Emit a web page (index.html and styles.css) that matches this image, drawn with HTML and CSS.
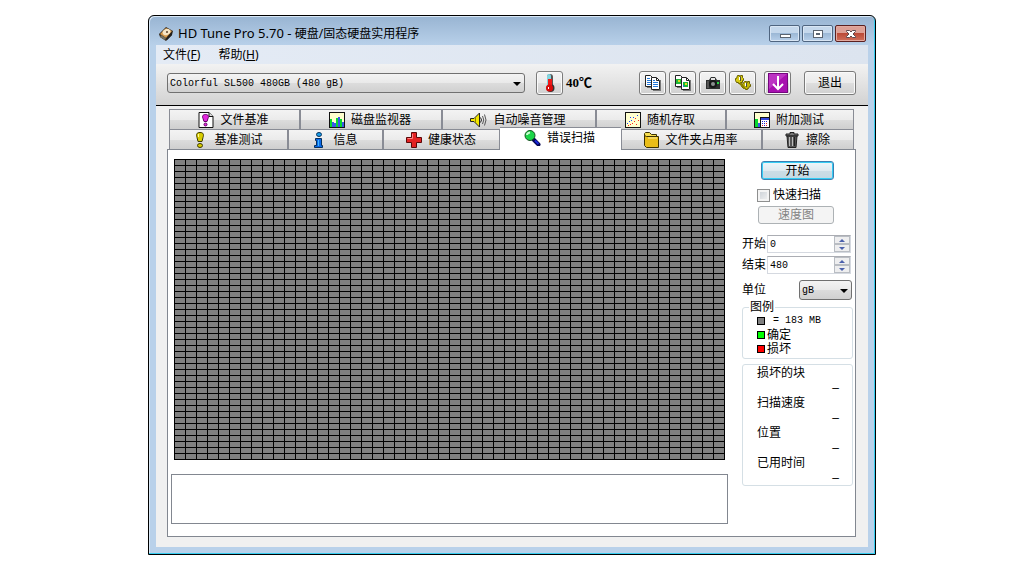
FILE: index.html
```html
<!DOCTYPE html>
<html lang="zh-CN">
<head>
<meta charset="utf-8">
<title>HD Tune Pro 5.70</title>
<link rel="stylesheet" href="styles.css">
</head>
<body>
<div class="window">
  <header class="titlebar">
    <svg class="app-icon" width="16" height="16" viewBox="0 0 16 16"><path d="M1 8 8 1l7 4-1 4-6 6-6-4z" fill="#332719"/><path d="M2 8 8 2l6 3-6 7z" fill="#d69a4c"/><ellipse cx="8.500" cy="6" rx="4" ry="3" fill="#f7e5c4" transform="rotate(-25 8.500 6)"/><circle cx="9" cy="6" r="1" fill="#5a4128"/><path d="m3 9 5 3-1 2-5-3z" fill="#76715f"/><path d="m9 12 5-6v3l-5 5z" fill="#20201f"/></svg>
    <h1 class="title">HD Tune Pro 5.70 - <span class="subtitle">硬盘/固态硬盘实用程序</span></h1>
    <div class="controls">
      <button class="ctl" aria-label="最小化"><svg width="12" height="10" viewBox="0 0 12 10"><rect x="1.500" y="5.500" width="10" height="3" fill="#fff" stroke="#5b6470"/></svg></button>
      <button class="ctl" aria-label="最大化"><svg width="12" height="10" viewBox="0 0 12 10"><rect x="1.500" y="1.500" width="9" height="7" fill="#fff" stroke="#5b6470"/><rect x="4.500" y="4.500" width="3" height="1" fill="#7fa3cc" stroke="#5b6470"/></svg></button>
      <button class="ctl ctl-close" aria-label="关闭"><svg width="12" height="10" viewBox="0 0 12 10"><path d="M1.500 1.500h3L6 3l1.500-1.500h3v1L8 5l2.500 2.500v1h-3L6 7 4.500 8.500h-3v-1L4 5 1.500 2.500z" fill="#fff" stroke="#5c4a50"/></svg></button>
    </div>
  </header>
  <div class="client">
    <nav class="menu">
      <button class="menu-item">文件(<u>F</u>)</button>
      <button class="menu-item">帮助(<u>H</u>)</button>
    </nav>
    <div class="toolbar">
      <div class="combo drive">
        <select class="combo-select" aria-label="硬盘"><option>Colorful SL500 480GB (480 gB)</option></select>
      </div>
      <div class="temp">
        <button class="tool" aria-label="温度"><svg width="20" height="20" viewBox="0 0 20 20"><path d="M10 4v10" stroke="#555" stroke-width="6" stroke-linecap="round"/><circle cx="10.500" cy="15" r="4" fill="#333"/><path d="M9 3v10" stroke="#82d4de" stroke-width="4" stroke-linecap="round"/><path d="M8 6h4v7h-4z" fill="#f01818"/><circle cx="9.500" cy="15" r="3.500" fill="#d80c0c"/><path d="M8 14h1v2H8z" fill="#fff"/></svg></button>
        <span class="temp-value">40℃</span>
      </div>
      <div class="tools">
        <button class="tool" aria-label="复制文本"><svg width="18" height="18" viewBox="0 0 18 18"><path d="M3 13h5v1H3zM16 6h1v11H9v-1h7z" fill="#777"/><path d="M1.500 1.500h5l2 2v9h-7z" fill="#fff" stroke="#222"/><path d="M3 4.500h3M3 6.500h4M3 8.500h4M3 10.500h4" stroke="#2478d8"/><path d="M7.500 3.500h5l3 3v9h-8z" fill="#fff" stroke="#222"/><path d="M12.500 4v2.500H15" fill="none" stroke="#222"/><path d="M9 6.500h2M9 8.500h5M9 10.500h5M9 12.500h5" stroke="#2478d8"/></svg></button>
        <button class="tool" aria-label="复制图像"><svg width="18" height="18" viewBox="0 0 18 18"><path d="M3 13h5v1H3zM16 6h1v11H9v-1h7z" fill="#777"/><path d="M1.500 1.500h5l2 2v9h-7z" fill="#fff" stroke="#222"/><path d="M2 5h5v5H2z" fill="#20b838"/><path d="M4 6h2v2H4z" fill="#d8d820"/><path d="M7.500 3.500h5l3 3v9h-8z" fill="#fff" stroke="#222"/><path d="M12.500 4v2.500H15" fill="none" stroke="#222"/><path d="M9 8h5v5H9z" fill="#18b838"/><path d="M11 9h2v2h-2z" fill="#e8e020"/><path d="M9 11h1v2H9z" fill="#2468d8"/></svg></button>
        <button class="tool" aria-label="截图"><svg width="18" height="18" viewBox="0 0 18 18"><path d="M2 6h3l2-3h4l2 3h3v9H2z" fill="#2e3030"/><path d="M7 4h4v2H7z" fill="#e4e4e4"/><path d="M3 7h2v7H3z" fill="#555"/><circle cx="9" cy="10" r="4" fill="#161818"/><circle cx="9" cy="10" r="2" fill="#8b9090"/><path d="M13 8h2v2h-2z" fill="#26d942"/></svg></button>
        <button class="tool" aria-label="选项"><svg width="20" height="20" viewBox="0 0 20 20"><g stroke="#6a6100"><path d="M4.500 2.500h2v1h1v-1h2v2l1 1v2h-1v2h-2v1h-2v-1h-2l-1-2v-2h1z" fill="#d8cb10"/><path d="M11.500 8.500h2v1h1v-1h2v2l1 1v2h-1l-1 2h-1v1h-2v-1h-2l-2-2v-2h1z" fill="#c4b808"/></g><path d="M7 10h2l4 6h-2l-5-5z" fill="#8c8200"/><path d="M7.500 4v4M13.500 10v4" stroke="#4d4d40"/><path d="M6.500 4v3M12.500 10v3" stroke="#fff"/></svg></button>
        <button class="tool tool-save" aria-label="保存"><svg width="20" height="20" viewBox="0 0 20 20"><rect x=".5" y=".5" width="19" height="19" fill="#a810b0" stroke="#74077e"/><path d="M1 1h18L1 16z" fill="#c94dd0" opacity=".6"/><path d="M10 3v13M5 11l5 5 5-5" fill="none" stroke="#fff" stroke-width="2"/></svg></button>
        <button class="tool exit">退出</button>
      </div>
    </div>
    <main class="body">
      <div class="tabs" role="tablist">
        <div class="tab-row tab-row-back">
          <button class="tab" role="tab"><svg width="16" height="18" viewBox="0 0 16 18"><path d="M1 1.500h10l4 4v11H1z" fill="#fff" stroke="#111"/><path d="M11 1.500v4h4" fill="#ddd" stroke="#111"/><path d="M7.500 3.500c3 0 3.500 2 2.500 4l-1 3H6l-1-3c-1-2-.5-4 2.500-4z" fill="#e328dd" stroke="#640065"/><circle cx="7.500" cy="13.500" r="1.500" fill="#e328dd" stroke="#640065"/></svg>文件基准</button>
          <button class="tab" role="tab"><svg width="16" height="16" viewBox="0 0 16 16"><rect x=".5" y=".5" width="15" height="15" fill="#ffffce" stroke="#111"/><path d="M1 7h2v8H1zM7 6h2v9H7zM11 7h2v8h-2z" fill="#08d830"/><path d="M3 10h2v5H3zM5 11h2v4H5zM9 5h2v10H9zM13 10h2v5h-2z" fill="#3858e8"/></svg>磁盘监视器</button>
          <button class="tab" role="tab"><svg width="17" height="16" viewBox="0 0 17 16"><path d="M.5 6.500H4L9.500 1v14L4 9.500H.5z" fill="#f4e600" stroke="#222"/><path d="M5.500 6v4" stroke="#8e8300"/><path d="M10.500 5.500q2 2.500 0 5" fill="none" stroke="#222"/><path d="M12.500 4q2.500 4 0 8M14.500 2.500q3 5.500 0 11" fill="none" stroke="#555"/></svg>自动噪音管理</button>
          <button class="tab" role="tab"><svg width="16" height="16" viewBox="0 0 16 16"><rect x=".5" y=".5" width="15" height="15" fill="#ffffce" stroke="#111"/><path d="M2 11h1v1H2zM4 9h1v1H4zM6 8h1v1H6zM8 5h1v1H8zM12 3h1v1h-1zM5 5h1v1H5z" fill="#24f"/><path d="M3 13h1v1H3zM7 11h1v1H7zM9 9h1v1H9zM11 12h1v1h-1zM13 8h1v1h-1zM10 6h1v1h-1zM5 12h1v1H5z" fill="#f22"/></svg>随机存取</button>
          <button class="tab" role="tab"><svg width="16" height="16" viewBox="0 0 16 16"><rect x=".5" y=".5" width="15" height="15" fill="#ffffce" stroke="#111"/><path d="M1 7h3v8H1z" fill="#08d830"/><path d="M4 11h2v4H4z" fill="#3858e8"/><rect x="6.500" y="5.500" width="9" height="10" fill="#fff" stroke="#111"/><path d="M7 6h8v2H7z" fill="#3548d8"/><path d="M8 9.500h6M8 11.500h6M8 13.500h6" stroke="#22c" stroke-dasharray="1 1"/><path d="M12 11.500h1M8 13.500h1M12 13.500h1" stroke="#e22"/></svg>附加测试</button>
        </div>
        <div class="tab-row tab-row-front">
          <button class="tab" role="tab"><svg width="16" height="16" viewBox="0 0 16 16"><path d="M8 .5c3.500 0 4 2 3 5l-1 4H6l-1-4C4 2.500 4.500.5 8 .5z" fill="#d8cd00" stroke="#3c3900"/><path d="M6.500 2v3" stroke="#fff8a0"/><ellipse cx="8" cy="13.500" rx="2.500" ry="2" fill="#d8cd00" stroke="#3c3900"/></svg>基准测试</button>
          <button class="tab" role="tab"><svg width="16" height="16" viewBox="0 0 16 16"><ellipse cx="8" cy="2.500" rx="2.500" ry="2" fill="#189de8" stroke="#052f5c"/><path d="M4.500 6.500h6v7h1v2h-8v-2h2v-5h-1z" fill="#0868e8" stroke="#052f5c"/><path d="M7.500 8v6" stroke="#40b8ff"/></svg>信息</button>
          <button class="tab" role="tab"><svg width="17" height="16" viewBox="0 0 17 16"><path d="M6.500.5h5v5h5v5h-5v5h-5v-5h-5v-5h5z" fill="#e32222" stroke="#5a0808"/><path d="M7.500 2v4.500h-5" fill="none" stroke="#ff8080"/></svg>健康状态</button>
          <button class="tab tab-active" role="tab" aria-selected="true"><svg width="17" height="16" viewBox="0 0 17 16"><path d="m9.500 9.500 5 5" stroke="#050550" stroke-width="4" stroke-linecap="round"/><path d="m11 10.500 3.500 3.500" stroke="#1828d8" stroke-width="2"/><circle cx="6" cy="5.500" r="5" fill="#1bd548" stroke="#13511e"/><path d="M3 5q0-2 3-2.500" stroke="#c8ffd0" fill="none" stroke-width="2"/></svg>错误扫描</button>
          <button class="tab" role="tab"><svg width="16" height="16" viewBox="0 0 16 16"><path d="M1.500 13V1.500l1-1h4l2 2h5V5" fill="#f5dd50" stroke="#3a3000"/><path d="M3.500 4.500h12v11h-12l-2-2v-10z" fill="#e9bd18" stroke="#3a3000"/><path d="M5 6h9" stroke="#fff09b"/></svg>文件夹占用率</button>
          <button class="tab" role="tab"><svg width="16" height="16" viewBox="0 0 16 16"><path d="M6 .5h4V2h4v2H2V2h4z" fill="#777" stroke="#222"/><path d="M3 4h10l-1 11.500H4z" fill="#555" stroke="#222"/><path d="M5.500 5v9M8.500 5v9" stroke="#bbb"/><path d="M10.500 5v9" stroke="#222"/></svg>擦除</button>
        </div>
      </div>
      <section class="panel">
        <div class="scan">
          <div class="blocks" role="img" aria-label="磁盘区块"></div>
          <div class="log"></div>
        </div>
        <aside class="side">
          <button class="start">开始</button>
          <label class="quick"><input class="check" type="checkbox">快速扫描</label>
          <button class="speedmap" disabled>速度图</button>
          <div class="field">
            <label for="from">开始</label>
            <div class="spin"><input class="spin-input" id="from" type="text" value="0"><div class="arrows"><button class="up" aria-label="增加"></button><button class="down" aria-label="减少"></button></div></div>
          </div>
          <div class="field">
            <label for="to">结束</label>
            <div class="spin"><input class="spin-input" id="to" type="text" value="480"><div class="arrows"><button class="up" aria-label="增加"></button><button class="down" aria-label="减少"></button></div></div>
          </div>
          <div class="field unit-field">
            <label for="unit">单位</label>
            <div class="combo unit"><select class="combo-select" id="unit"><option>gB</option></select></div>
          </div>
          <fieldset class="group">
            <legend class="legend">图例</legend>
            <div class="key"><i class="swatch"></i><span class="size">= 183 MB</span></div>
            <div class="key"><i class="swatch swatch-ok"></i>确定</div>
            <div class="key"><i class="swatch swatch-bad"></i>损坏</div>
          </fieldset>
          <dl class="group stats">
            <dt class="name">损坏的块</dt><dd class="value">–</dd>
            <dt class="name">扫描速度</dt><dd class="value">–</dd>
            <dt class="name">位置</dt><dd class="value">–</dd>
            <dt class="name">已用时间</dt><dd class="value">–</dd>
          </dl>
        </aside>
      </section>
    </main>
  </div>
</div>
</body>
</html>
```

FILE: styles.css
```css
* { box-sizing: border-box; }

body {
  margin: 0;
  padding: 15px 148px;
  background: #fff;
  color: #000;
  font: 12px/14px "Liberation Sans", "Noto Sans CJK SC", sans-serif;
}

button, input, select {
  margin: 0;
  padding: 0;
  font: inherit;
  color: inherit;
}

svg { display: block; flex: none; }

.window {
  display: flex;
  flex-direction: column;
  padding: 0 7px 7px;
  border: 1px solid #000;
  border-radius: 6px 6px 0 0;
  background: linear-gradient(#98b4d2, #b9d1ea 30px);
  box-shadow: inset -1px -1px #35cdf0, inset 1px 1px #d9e8f6;
}

.titlebar {
  display: flex;
  align-items: center;
  height: 29px;
  padding-left: 2px;
}

.title {
  flex: 1;
  margin: 6px 0 0 4px;
  font: 13px/16px "Noto Sans", "Noto Sans CJK SC", sans-serif;
}

.subtitle { font-size: 12px; }

.app-icon { margin-top: 6px; }

.controls {
  display: flex;
  gap: 2px;
  margin: 6px 2px 0 0;
}

.ctl {
  display: flex;
  align-items: center;
  justify-content: center;
  width: 31px;
  height: 17px;
  border: 1px solid #4f6580;
  border-radius: 2px;
  background: linear-gradient(#c5d8ec 45%, #9cb8d6 50%, #b8d0ea);
  box-shadow: inset 0 0 0 1px #d9e6f4;
}

.ctl-close {
  border-color: #5b2020;
  background: linear-gradient(#dda096 45%, #bb4a38 50%, #d0705c);
  box-shadow: inset 0 0 0 1px #e3aaa0;
}

.client { background: #f0f0f0; }

.menu {
  display: flex;
  gap: 18px;
  height: 19px;
  padding-left: 7px;
  background: linear-gradient(90deg, #e4ebf5, #dce4ef);
}

.menu-item {
  border: 0;
  background: none;
  font: 12px/20px "Noto Sans", "Noto Sans CJK SC", sans-serif;
}

.toolbar {
  display: flex;
  align-items: center;
  height: 42px;
  padding: 0 12px 4px 11px;
  border-bottom: 1px solid #000;
  background: linear-gradient(#f2f2f2, #d2d2d2);
}

.combo {
  position: relative;
  height: 20px;
}

.combo::after {
  content: "";
  position: absolute;
  right: 4px;
  top: 9px;
  border: 4px solid transparent;
  border-top-color: #000;
  border-bottom: 0;
  pointer-events: none;
}

.combo-select {
  width: 100%;
  height: 100%;
  padding: 2px 0 0 2px;
  border: 1px solid #707070;
  border-radius: 3px;
  appearance: none;
  background: linear-gradient(#f3f3f3, #e9e9e9 50%, #dcdcdc 51%, #d0d0d0);
  font: 10px/16px "Liberation Mono", monospace;
}

.drive { flex: 1; }

.temp {
  display: flex;
  align-items: center;
  gap: 3px;
  width: 103px;
  margin-left: 11px;
}

.temp-value { font: bold 13px/16px "Liberation Serif", "Noto Sans CJK SC", serif; }

.tools { display: flex; gap: 3px; }

.tool {
  display: flex;
  align-items: center;
  justify-content: center;
  width: 27px;
  height: 24px;
  border: 1px solid #7b7b7b;
  border-radius: 3px;
  background: linear-gradient(#f3f3f3, #ebebeb 50%, #dedede 51%, #d0d0d0);
  box-shadow: inset 0 0 0 1px #fafafa;
}

.tool-save { margin-left: 5px; }

.exit { width: 52px; margin-left: 10px; }

.body { padding: 3px 12px 10px 11px; }

.tabs { padding: 0 2px; }

.tab-row { display: grid; height: 20px; }

.tab-row-back { grid-template-columns: 131fr 142fr 154fr 130fr 128fr; }

.tab-row-front { grid-template-columns: 119fr 95fr 117fr 121fr 141fr 92fr; }

.tab {
  display: flex;
  align-items: center;
  justify-content: center;
  gap: 6px;
  height: 20px;
  padding: 0 2px 0 0;
  border: 0 solid #898c95;
  border-width: 1px 1px 0;
  background: linear-gradient(#f3f3f3, #ebebeb 50%, #dddddd 51%, #cfcfcf);
}

.tab-active {
  position: relative;
  height: 24px;
  margin-top: -2px;
  padding: 0 2px 3px 0;
  border-width: 1px 0 0;
  background: #fff;
}

.panel {
  display: flex;
  gap: 14px;
  padding: 9px 2px 12px 3px;
  border: 1px solid #828790;
  background: #fff;
}

.scan {
  display: flex;
  flex: 1;
  flex-direction: column;
  gap: 14px;
}

/* Each block is 10x5 with a one-pixel rule on its top and left. */
.blocks {
  min-height: 301px;
  margin: 0 3px;
  border: solid #000;
  border-width: 0 1px 1px 0;
  background:
    linear-gradient(90deg, #000 1px, transparent 1px) 0 0 / 11px 6px,
    linear-gradient(#000 1px, #808080 1px) 0 0 / 11px 6px;
}

.log {
  height: 50px;
  border: 1px solid #828790;
}

.side {
  display: flex;
  flex-direction: column;
  width: 111px;
  padding-top: 2px;
}

.start {
  width: 73px;
  height: 19px;
  margin-left: 19px;
  border: 1px solid #3c7fb1;
  border-radius: 3px;
  background: linear-gradient(#eef6fa, #dfeaf0 50%, #cddde6 51%, #c4d9e4);
  box-shadow: inset 0 0 0 1px #35cdf5;
}

.quick {
  display: flex;
  align-items: center;
  gap: 3px;
  margin: 8px 0 4px 15px;
}

.check {
  width: 13px;
  height: 13px;
  border: 1px solid #8e8f8f;
  appearance: none;
  background: linear-gradient(135deg, #c8ced4, #f4f4f4);
  box-shadow: inset 0 0 0 2px #f4f4f4;
}

.speedmap {
  width: 76px;
  height: 18px;
  margin: 0 0 11px 16px;
  border: 1px solid #adb2b5;
  border-radius: 3px;
  background: #f4f4f4;
  color: #838383;
}

.field {
  display: flex;
  align-items: center;
  justify-content: space-between;
  height: 18px;
  margin: 0 2px 3px 0;
}

.spin {
  display: flex;
  width: 84px;
  height: 18px;
  border: 1px solid #d5d9e0;
  border-top-color: #abadb3;
}

.spin-input {
  flex: 1;
  min-width: 0;
  padding: 2px 0 0 2px;
  border: 0;
  outline: 0;
  background: #fff;
  font: 10px/14px "Liberation Mono", monospace;
}

.arrows {
  display: grid;
  width: 16px;
}

.up, .down {
  display: flex;
  align-items: center;
  justify-content: center;
  border: 1px solid #b9bdc3;
  background: #eeeeef;
}

.up::before, .down::before {
  content: "";
  border: 3px solid transparent;
}

.up::before { border-top: 0; border-bottom-color: #4b60ac; }

.down::before { border-bottom: 0; border-top-color: #4b60ac; }

.unit-field {
  height: 20px;
  margin: 3px 1px 0 0;
}

.unit { width: 53px; }

.group {
  margin: 0;
  padding: 0 0 2px 14px;
  border: 1px solid #d5dfe5;
  border-radius: 3px;
}

.legend {
  margin-left: -8px;
  padding: 0 1px;
}

.key {
  display: flex;
  align-items: center;
  gap: 2px;
  height: 14px;
}

.swatch {
  width: 8px;
  height: 8px;
  border: 1px solid #000;
  background: #808080;
}

.swatch-ok { background: #0f0; }

.swatch-bad { background: #f00; }

.size {
  padding-left: 6px;
  font: 10px/14px "Liberation Mono", monospace;
}

.stats { margin-top: 5px; padding-bottom: 0; }

.name { line-height: 16px; }

.value {
  margin: 0 13px 0 0;
  line-height: 14px;
  text-align: right;
}
```
